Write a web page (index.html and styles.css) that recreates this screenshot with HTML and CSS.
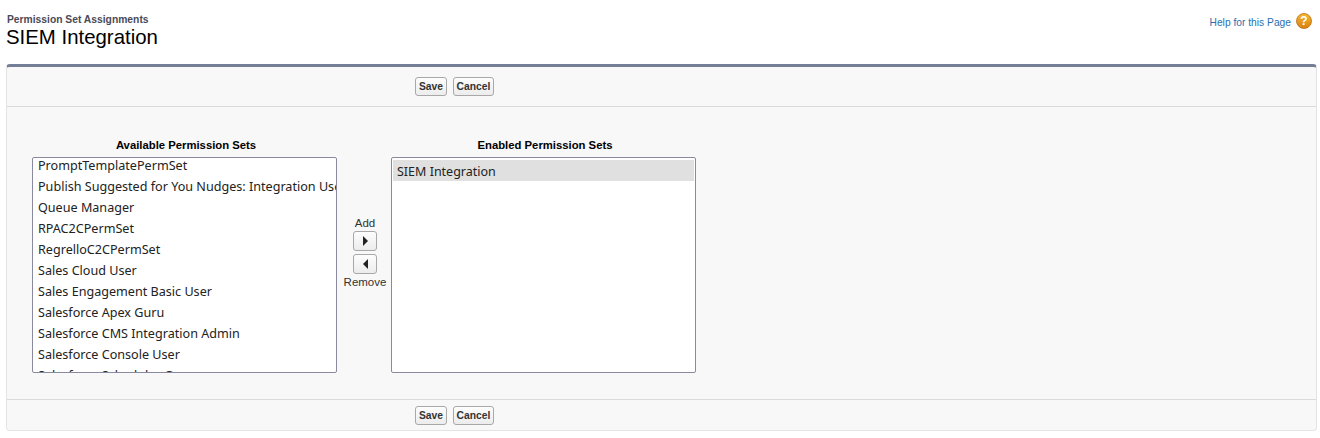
FILE: index.html
```html
<!DOCTYPE html>
<html lang="en">
<head>
  <meta charset="UTF-8">
  <title>Permission Set Assignments</title>
  <link rel="stylesheet" href="styles.css">
</head>
<body>
  <header class="page-header">
    <div class="titles">
      <div class="page-type">Permission Set Assignments</div>
      <h1 class="page-name">SIEM Integration</h1>
    </div>
    <a class="help-link" href="#">
      <span>Help for this Page</span>
      <svg class="help-icon" width="16" height="16" viewBox="0 0 16 16">
        <defs>
          <linearGradient id="help-fill" x1="0" y1="0" x2="0" y2="1">
            <stop offset="0" stop-color="#f7b733"/>
            <stop offset="1" stop-color="#d9800f"/>
          </linearGradient>
        </defs>
        <circle cx="8" cy="8" r="7.5" fill="url(#help-fill)" stroke="#b86f10" stroke-width="0.8"/>
        <text x="8" y="12" text-anchor="middle" class="help-mark">?</text>
      </svg>
    </a>
  </header>

  <section class="panel">
    <div class="button-row top">
      <button class="btn">Save</button>
      <button class="btn">Cancel</button>
    </div>

    <div class="panel-body">
      <div class="duel">
        <div class="duel-col">
          <div class="col-title">Available Permission Sets</div>
          <div class="list-box">
            <div class="list-items scrolled">
              <div class="item">PromptTemplatePermSet</div>
              <div class="item">Publish Suggested for You Nudges: Integration User</div>
              <div class="item">Queue Manager</div>
              <div class="item">RPAC2CPermSet</div>
              <div class="item">RegrelloC2CPermSet</div>
              <div class="item">Sales Cloud User</div>
              <div class="item">Sales Engagement Basic User</div>
              <div class="item">Salesforce Apex Guru</div>
              <div class="item">Salesforce CMS Integration Admin</div>
              <div class="item">Salesforce Console User</div>
              <div class="item">Salesforce Scheduler Group</div>
            </div>
          </div>
        </div>

        <div class="arrows">
          <div class="arrow-label">Add</div>
          <button class="arrow-btn">
            <svg width="5" height="10" viewBox="0 0 5 10"><path d="M0 0 L5 5 L0 10 Z" fill="#222"/></svg>
          </button>
          <button class="arrow-btn">
            <svg width="5" height="10" viewBox="0 0 5 10"><path d="M5 0 L0 5 L5 10 Z" fill="#222"/></svg>
          </button>
          <div class="arrow-label">Remove</div>
        </div>

        <div class="duel-col">
          <div class="col-title">Enabled Permission Sets</div>
          <div class="list-box">
            <div class="list-items">
              <div class="item selected">SIEM Integration</div>
            </div>
          </div>
        </div>
      </div>
    </div>

    <div class="button-row bottom">
      <button class="btn">Save</button>
      <button class="btn">Cancel</button>
    </div>
  </section>
</body>
</html>
```

FILE: styles.css
```css
* {
  margin: 0;
  padding: 0;
  box-sizing: border-box;
}

body {
  font-family: "Liberation Sans", Arial, sans-serif;
  background: #fff;
  color: #000;
  padding: 0 3px 0 6px;
  overflow: hidden;
}

/* Page header */
.page-header {
  display: flex;
  justify-content: space-between;
  height: 64px;
  padding-top: 13px;
}

.titles {
  padding: 1px 0 0 1px;
}

.page-type {
  font-size: 10.3px;
  font-weight: bold;
  line-height: 11px;
  color: #4a4a56;
}

.page-name {
  font-size: 20.4px;
  font-weight: normal;
  line-height: 24px;
  margin-left: -1px;
  color: #000;
}

.help-link {
  display: flex;
  align-items: flex-start;
  gap: 5px;
  padding-right: 5px;
  font-size: 10.25px;
  line-height: 20px;
  color: #2a6fb0;
  text-decoration: none;
}

.help-icon {
  display: block;
}

.help-mark {
  font-family: "Liberation Sans", Arial, sans-serif;
  font-size: 12px;
  font-weight: bold;
  fill: #fff;
}

/* Panel */
.panel {
  height: 367px;
  background: #f8f8f8;
  border: 1px solid #e4e4e4;
  border-top: 3px solid #747e96;
  border-radius: 4px;
  display: flex;
  flex-direction: column;
}

.button-row {
  display: flex;
  justify-content: flex-start;
  gap: 6px;
  padding-left: 408px;
}

.button-row.top {
  height: 40px;
  padding-top: 10px;
  border-bottom: 1px solid #dddbda;
}

.button-row.bottom {
  height: 31px;
  padding-top: 6px;
  border-top: 1px solid #dddbda;
}

.btn {
  height: 19px;
  padding: 0 0 1px;
  font-family: "Liberation Sans", Arial, sans-serif;
  font-size: 10.3px;
  font-weight: bold;
  color: #333;
  background: linear-gradient(#fdfdfd, #ececec);
  border: 1px solid #a8a8a8;
  border-radius: 3px;
}

.button-row .btn:first-child {
  width: 32px;
}

.button-row .btn:last-child {
  width: 41px;
}

/* Dueling lists */
.panel-body {
  flex: 1;
  padding: 32px 0 0 25px;
}

.duel {
  display: flex;
}

.duel-col {
  width: 305px;
}

.col-title {
  padding-left: 3px;
  font-size: 11.3px;
  font-weight: bold;
  line-height: 13px;
  text-align: center;
  margin-bottom: 5px;
  color: #000;
}

.list-box {
  height: 216px;
  background: #fff;
  border: 1px solid #8a8a9e;
  border-radius: 2px;
  overflow: hidden;
  padding: 1px;
}

.list-items.scrolled {
  margin-top: -4px;
}

.list-items:not(.scrolled) {
  padding-top: 1px;
}

.item {
  height: 21px;
  padding: 0 4px;
  font-family: "Noto Sans", sans-serif;
  font-size: 12.6px;
  line-height: 21px;
  white-space: nowrap;
  color: #222;
}

.item.selected {
  background: #e0e0e0;
  font-size: 12.5px;
  line-height: 23px;
}

.arrows {
  width: 54px;
  padding: 77px 0 0 2px;
  display: flex;
  flex-direction: column;
  align-items: center;
}

.arrow-label {
  font-size: 11.5px;
  line-height: 15px;
  color: #333;
}

.arrow-btn {
  width: 24px;
  height: 20px;
  margin-bottom: 3px;
  display: flex;
  align-items: center;
  justify-content: center;
  background: linear-gradient(#fdfdfd, #ececec);
  border: 1px solid #a8a8a8;
  border-radius: 3px;
}

.arrow-btn + .arrow-label {
  margin-top: -2px;
}
```
